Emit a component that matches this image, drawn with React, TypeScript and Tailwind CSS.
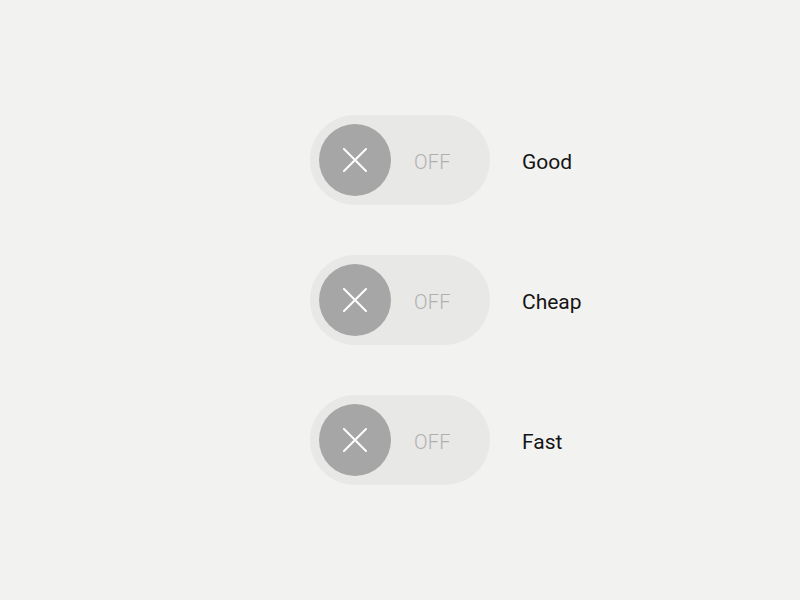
import React from "react";

const items = ["Good", "Cheap", "Fast"];

function Toggle({ label }: { label: string }) {
  return (
    <div className="flex items-center gap-[32px]">
      <div className="flex h-[90px] w-[180px] items-center rounded-full bg-[#e8e8e7] pl-[9px]">
        <div className="flex h-[72px] w-[72px] items-center justify-center rounded-full bg-[#a6a6a6]">
          <svg width="24" height="24" viewBox="0 0 24 24" fill="none">
            <path d="M1 1L23 23M23 1L1 23" stroke="#ffffff" strokeWidth="2" strokeLinecap="round" />
          </svg>
        </div>
        <span className="ml-[23px] mt-[4px] text-[20px] font-light leading-none tracking-[0.2px] text-[#b0b0b0]" style={{ fontFamily: "Roboto, sans-serif" }}>
          OFF
        </span>
      </div>
      <span className="mt-[4px] text-[21px] leading-none text-[#151515]" style={{ fontFamily: "Roboto, sans-serif" }}>
        {label}
      </span>
    </div>
  );
}

export default function App() {
  return (
    <div className="flex h-[600px] w-[800px] flex-col justify-center gap-[50px] bg-[#f2f2f1] pl-[310px]">
      {items.map((l) => (
        <Toggle key={l} label={l} />
      ))}
    </div>
  );
}
